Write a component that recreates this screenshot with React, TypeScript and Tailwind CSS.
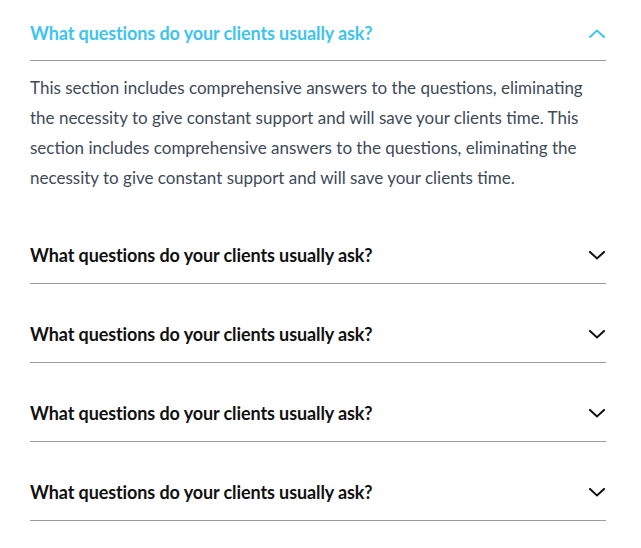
import React from "react";

const question = "What questions do your clients usually ask?";
const answer =
  "This section includes comprehensive answers to the questions, eliminating the necessity to give constant support and will save your clients time. This section includes comprehensive answers to the questions, eliminating the necessity to give constant support and will save your clients time.";

function Chevron({ up }: { up?: boolean }) {
  return (
    <svg width="16" height="9" viewBox="0 0 16 9" fill="none" className="shrink-0">
      <path
        d={up ? "M1 8L8 1.5L15 8" : "M1 1L8 7.5L15 1"}
        stroke="currentColor"
        strokeWidth="2"
        strokeLinecap="square"
      />
    </svg>
  );
}

export default function App() {
  const items = [0, 1, 2, 3, 4];
  return (
    <div className="min-h-[548px] bg-white pl-[30px] pr-[35px] font-['Lato',sans-serif]">
      {items.map((i) => {
        const open = i === 0;
        return (
          <div key={i}>
            <button
              className={`flex w-full items-center justify-between border-b border-[#9c9c9c] pr-[1px] text-left text-[18px] font-bold leading-6 tracking-[-0.1px] ${
                open ? "pt-[21px] pb-[15px] text-[#3ec4ef]" : "pt-[38px] pb-[16px] text-[#111]"
              }`}
            >
              <span>{question}</span>
              <Chevron up={open} />
            </button>
            {open && (
              <p className="pt-[12px] pb-[12px] text-[17px] leading-[30px] text-[#3d4a5a]">
                {answer}
              </p>
            )}
          </div>
        );
      })}
    </div>
  );
}
